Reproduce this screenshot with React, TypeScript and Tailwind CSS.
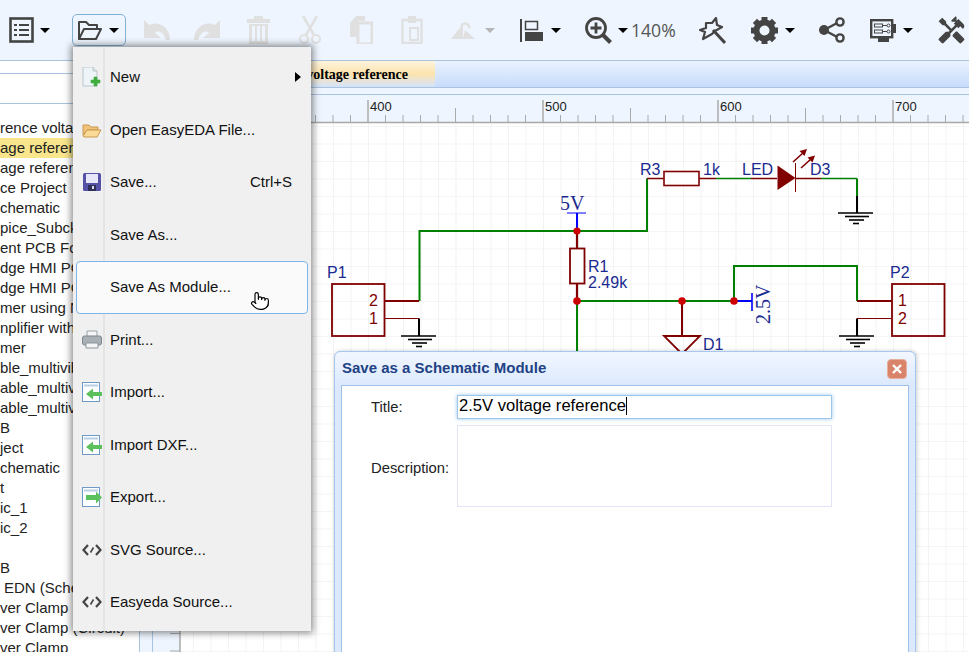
import { Pointer } from "lucide-react";
import { MdHandyman } from "react-icons/md";

const treeRows = [
  { text: "rence voltage reference", cls: "" },
  { text: "age reference", cls: "bg-[#f8e58c]" },
  { text: "age reference", cls: "" },
  { text: "ce Project", cls: "" },
  { text: "chematic", cls: "" },
  { text: "pice_Subckt", cls: "" },
  { text: "ent PCB Footprint", cls: "" },
  { text: "dge HMI PCB", cls: "" },
  { text: "dge HMI PCB", cls: "" },
  { text: "mer using NE555", cls: "" },
  { text: "nplifier with LM386", cls: "" },
  { text: "mer", cls: "" },
  { text: "ble_multivibrator", cls: "" },
  { text: "able_multivibrator", cls: "" },
  { text: "able_multivibrator", cls: "" },
  { text: "B", cls: "" },
  { text: "ject", cls: "" },
  { text: "chematic", cls: "" },
  { text: "t", cls: "" },
  { text: "ic_1", cls: "" },
  { text: "ic_2", cls: "" },
  { text: "", cls: "" },
  { text: "B", cls: "" },
  { text: "EDN (Schematic)", cls: "pl-[4px]" },
  { text: "ver Clamp (Schematic)", cls: "" },
  { text: "ver Clamp (Circuit)", cls: "" },
  { text: "ver Clamp", cls: "" },
];

function Caret({ className = "", grey = false }: { className?: string; grey?: boolean }) {
  return (
    <span
      className={`shrink-0 w-[10px] h-0 border-x-[5px] border-t-[5px] border-x-transparent ${
        grey ? "border-t-[#b5b5b5]" : "border-t-black"
      } ${className}`}
    />
  );
}

function Toolbar() {
  const dark = "#444444";
  const off = "#e0e0e0";
  return (
    <div className="flex items-center h-[60px] shrink-0 bg-[#eef5fe]">
      {/* list */}
      <svg width="25" height="26" viewBox="0 0 25 26" className="ml-[9px] shrink-0">
        <rect x="1.5" y="1.5" width="22" height="23" fill="none" stroke={dark} strokeWidth="2.6" />
        <path d="M5 8h3M10 8h10M5 13h3M10 13h10M5 18h3M10 18h10" stroke={dark} strokeWidth="2.2" />
      </svg>
      <Caret className="ml-[6px]" />
      {/* open, pressed */}
      <div className="ml-[22px] w-[54px] h-[32px] shrink-0 flex items-center pl-[4px] border border-[#7fb0d6] rounded-[5px]">
        <svg width="25" height="21" viewBox="0 0 25 21" className="shrink-0">
          <path d="M2 19V2h7l3 3h8v4M2 19h17l5-10H7z" fill="none" stroke={dark} strokeWidth="2" strokeLinejoin="round" />
        </svg>
        <Caret className="ml-[7px]" />
      </div>
      {/* undo, redo */}
      <svg width="27" height="22" viewBox="0 0 27 22" className="ml-[17px] shrink-0">
        <path d="M1 1v18h17l-6-5c3-3 8-2 11 7h4C27 8 15 1 6 6z" fill={off} />
      </svg>
      <svg width="27" height="22" viewBox="0 0 27 22" className="ml-[24px] shrink-0 -scale-x-100">
        <path d="M1 1v18h17l-6-5c3-3 8-2 11 7h4C27 8 15 1 6 6z" fill={off} />
      </svg>
      {/* trash */}
      <svg width="23" height="28" viewBox="0 0 23 28" className="ml-[26px] shrink-0">
        <path d="M7 0h9v3h7v4H0V3h7z" fill={off} />
        <path d="M2 8h19v20H2zM5 10v15h3V10zM10 10v15h3V10zM15 10v15h3V10z" fill={off} fillRule="evenodd" />
      </svg>
      {/* scissors */}
      <svg width="22" height="28" viewBox="0 0 22 28" className="ml-[29px] shrink-0">
        <path d="M4 0l11 19M18 0L7 19" stroke={off} strokeWidth="2.6" fill="none" />
        <circle cx="5" cy="23" r="4" fill="none" stroke={off} strokeWidth="2" />
        <circle cx="17" cy="23" r="4" fill="none" stroke={off} strokeWidth="2" />
      </svg>
      {/* copy */}
      <svg width="24" height="28" viewBox="0 0 24 28" className="ml-[28px] shrink-0">
        <path d="M7 0h9v5H9v16H1V7z" fill={off} />
        <path d="M11 7h8l4 0v21H9V7z" fill="none" stroke={off} strokeWidth="3" />
      </svg>
      {/* paste */}
      <svg width="23" height="28" viewBox="0 0 23 28" className="ml-[28px] shrink-0">
        <path d="M1.5 4h19v23h-19z" fill="none" stroke={off} strokeWidth="2.4" />
        <path d="M7 0h8v7H7z" fill={off} />
        <path d="M9 12h8v12H9z" fill="none" stroke={off} strokeWidth="2" />
      </svg>
      {/* rotate / flip */}
      <svg width="25" height="19" viewBox="0 0 25 19" className="ml-[26px] shrink-0">
        <path d="M1 18L13 3v15zM13 18h12L15 9z" fill={off} />
        <path d="M11 5c3-4 7-3 9 2" fill="none" stroke={off} strokeWidth="2.4" />
      </svg>
      <Caret grey className="ml-[10px]" />
      {/* align */}
      <svg width="23" height="23" viewBox="0 0 23 23" className="ml-[25px] shrink-0">
        <path d="M1 0v23" stroke={dark} strokeWidth="2" />
        <rect x="5.5" y="2.5" width="12" height="8" fill="none" stroke={dark} strokeWidth="1.5" />
        <rect x="5" y="13" width="18" height="9" fill={dark} />
      </svg>
      <Caret className="ml-[8px]" />
      {/* zoom */}
      <svg width="27" height="27" viewBox="0 0 27 27" className="ml-[24px] shrink-0">
        <circle cx="11" cy="11" r="9.5" fill="none" stroke={dark} strokeWidth="2.8" />
        <path d="M11 5.5v11M5.5 11h11" stroke={dark} strokeWidth="2.8" />
        <path d="M18 18l7.5 7.5" stroke={dark} strokeWidth="4" />
      </svg>
      <Caret className="ml-[6px]" />
      <span className="ml-[3px] w-[44px] shrink-0 text-[17.6px] text-[#555] font-['Open_Sans',sans-serif]">140%</span>
      {/* wand */}
      <svg width="27" height="27" viewBox="0 0 27 27" className="ml-[24px] shrink-0">
        <path d="M7 6h6l4-5 1 7 5 2-7 4-3 3-9 5 2-7-5-2 6-2z" fill="none" stroke={dark} strokeWidth="2.2" strokeLinejoin="round" />
        <path d="M14 13l12 13" stroke={dark} strokeWidth="3" />
      </svg>
      {/* gear */}
      <svg width="27" height="27" viewBox="0 0 27 27" className="ml-[25px] shrink-0">
        <g fill={dark}>
          <rect x="10.5" y="0" width="6" height="27" />
          <rect x="10.5" y="0" width="6" height="27" transform="rotate(45 13.5 13.5)" />
          <rect x="10.5" y="0" width="6" height="27" transform="rotate(90 13.5 13.5)" />
          <rect x="10.5" y="0" width="6" height="27" transform="rotate(135 13.5 13.5)" />
          <circle cx="13.5" cy="13.5" r="11" />
        </g>
        <circle cx="13.5" cy="13.5" r="5" fill="#eef5fe" />
      </svg>
      <Caret className="ml-[7px]" />
      {/* share */}
      <svg width="26" height="26" viewBox="0 0 26 26" className="ml-[24px] shrink-0">
        <path d="M5 13L21 4.5M5 13l16 8.5" stroke={dark} strokeWidth="2.4" />
        <circle cx="5" cy="13" r="5" fill={dark} />
        <circle cx="21" cy="5" r="3.6" fill="#eef5fe" stroke={dark} strokeWidth="2.4" />
        <circle cx="21" cy="21" r="3.6" fill="#eef5fe" stroke={dark} strokeWidth="2.4" />
      </svg>
      {/* panel */}
      <svg width="26" height="23" viewBox="0 0 26 23" className="ml-[25px] shrink-0">
        <rect x="1.2" y="1.2" width="21" height="17" fill="none" stroke={dark} strokeWidth="2.4" />
        <path d="M23 5h3v9h-3zM8 19h11v4H8z" fill={dark} />
        <rect x="4.5" y="5" width="8" height="3" fill="none" stroke={dark} strokeWidth="1" />
        <rect x="4.5" y="11" width="8" height="3" fill="none" stroke={dark} strokeWidth="1" />
        <path d="M12.5 6.5H17M12.5 12.5H17" stroke={dark} strokeWidth="1" />
        <circle cx="18.5" cy="6.5" r="1.5" fill="none" stroke={dark} />
        <circle cx="18.5" cy="12.5" r="1.5" fill="none" stroke={dark} />
      </svg>
      <Caret className="ml-[7px]" />
      <MdHandyman className="ml-[23px] shrink-0 w-[31px] h-[31px] text-[#444]" />
    </div>
  );
}

function LeftTree() {
  return (
    <div className="w-[139px] shrink-0 bg-white flex flex-col overflow-hidden border-t border-[#a9c4e0]">
      <div className="h-[13px] shrink-0 border-b border-[#a9c4e0]" />
      <div className="h-[30px] shrink-0 border-b border-[#a9c4e0]" />
      <div className="pt-[14px] flex flex-col text-[15px] text-[#222] font-['Liberation_Sans',sans-serif]">
        {treeRows.map((row, i) => (
          <div key={i} className={`h-[20px] leading-[20px] whitespace-pre ${row.cls}`}>
            {row.text}
          </div>
        ))}
      </div>
    </div>
  );
}

const blue = "#1a2a90";
const red = "#800000";
const green = "#008000";

function Ground({ x, y }: { x: number; y: number }) {
  return (
    <g stroke="#000" strokeWidth="1.6">
      <path d={`M${x - 18} ${y}H${x + 17}`} />
      <path d={`M${x - 11} ${y + 3.5}H${x + 13}`} />
      <path d={`M${x - 7} ${y + 7}H${x + 8}`} />
      <path d={`M${x - 3} ${y + 10.5}H${x + 3}`} />
    </g>
  );
}

function Canvas() {
  const ticks = [];
  for (let x = 193; x < 969; x += 17.5) {
    const n = Math.round((x - 368) / 17.5);
    const len = n % 10 === 0 ? 22 : n % 5 === 0 ? 14 : 7;
    ticks.push(<path key={x} d={`M${x} 122V${122 - len}`} stroke="#aaa" strokeWidth={n % 10 === 0 ? 1.5 : 1} />);
  }
  return (
    <svg viewBox="153 95 816 557" className="block w-[816px] h-[557px] font-['Liberation_Sans',sans-serif]">
      <defs>
        <pattern id="grid" x="368" y="126" width="17.5" height="17.5" patternUnits="userSpaceOnUse">
          <path d="M17.5 0H0V17.5" fill="none" stroke="#ececec" strokeWidth="1.2" />
        </pattern>
      </defs>
      <rect x="180" y="122" width="789" height="530" fill="#fff" />
      <rect x="180" y="122" width="789" height="530" fill="url(#grid)" />
      {/* rulers */}
      <rect x="153" y="95" width="816" height="27" fill="#eef5fe" />
      <rect x="153" y="122" width="27" height="530" fill="#eef5fe" />
      {ticks}
      <path d="M153 122.5H969" stroke="#a8a8a8" strokeWidth="1.5" />
      <path d="M180 122V652" stroke="#a8a8a8" strokeWidth="1.5" />
      <path d="M170 633.5h10M170 651h10" stroke="#aaa" />
      <g fontSize="13" fill="#222">
        <text x="370" y="111">400</text>
        <text x="545" y="111">500</text>
        <text x="720" y="111">600</text>
        <text x="895" y="111">700</text>
      </g>

      {/* wires */}
      <g fill="none" stroke={green} strokeWidth="2">
        <path d="M419.5 301V231H647V178.5" />
        <path d="M577 301V352" />
        <path d="M577 301H734" />
        <path d="M734 301V266H857V301" />
        <path d="M857 178.5V196" />
      </g>
      <path d="M716 178.5H751M821 178.5H857" stroke={green} strokeWidth="1.4" />

      {/* P1 */}
      <rect x="332" y="284" width="52.5" height="52" fill="none" stroke={red} strokeWidth="1.8" />
      <path d="M385 301h34" stroke={red} strokeWidth="2.2" />
      <path d="M385 318.5h34" stroke={red} strokeWidth="1.2" />
      <path d="M419 318.5V336" stroke="#000" strokeWidth="2" />
      <Ground x={419} y={336} />

      {/* P2 */}
      <rect x="892" y="284" width="52.5" height="52" fill="none" stroke={red} strokeWidth="1.8" />
      <path d="M857 301h35" stroke={red} strokeWidth="2.2" />
      <path d="M857 318.5h35" stroke={red} strokeWidth="1.2" />
      <path d="M857 318.5V336" stroke="#000" strokeWidth="2" />
      <Ground x={857} y={336} />

      {/* LED branch */}
      <path d="M647 178.5h17M699 178.5h17M751 178.5h26M796 178.5h25" stroke={red} strokeWidth="1.4" />
      <rect x="664" y="171.5" width="35" height="14" fill="#fff" stroke={red} strokeWidth="1.6" />
      <path d="M777.5 165.5V190L795.5 178z" fill={red} />
      <path d="M795.5 163V192" stroke={red} strokeWidth="1" />
      <path d="M793 162l10-9M801 168l10-9" stroke={red} strokeWidth="1.6" />
      <path d="M807 149l-7.5 2 5 5zM815 155.5l-7.5 2 5 5z" fill={red} />
      <path d="M857 196V213" stroke="#000" strokeWidth="2" />
      <Ground x={856} y={213} />

      {/* R1 */}
      <path d="M577 231V248M577 284V301" stroke={red} strokeWidth="2.2" />
      <rect x="570" y="248.5" width="14.5" height="35" fill="#fff" stroke={red} strokeWidth="1.8" />

      {/* D1 */}
      <path d="M682 301V336" stroke={red} strokeWidth="2" />
      <path d="M664 336H700L682 354z" fill="none" stroke={red} strokeWidth="1.8" />

      {/* power flags */}
      <path d="M577 213V231" stroke="#0000ff" strokeWidth="2" />
      <path d="M567 213H586" stroke="#0000ff" strokeWidth="1" />
      <path d="M734 301H752" stroke="#0000ff" strokeWidth="2" />
      <path d="M752 293V311" stroke="#0000ff" strokeWidth="1.6" />

      <g fill="#cc0000">
        <circle cx="577" cy="231" r="3.6" />
        <circle cx="577" cy="301" r="3.8" />
        <circle cx="682" cy="301" r="3.8" />
        <circle cx="734" cy="301" r="3.8" />
      </g>

      <g fontSize="16" fill={blue}>
        <text x="327" y="278">P1</text>
        <text x="588" y="272">R1</text>
        <text x="588" y="288">2.49k</text>
        <text x="640" y="175">R3</text>
        <text x="703" y="175">1k</text>
        <text x="742" y="175">LED</text>
        <text x="810" y="175">D3</text>
        <text x="890" y="278">P2</text>
        <text x="703" y="350">D1</text>
      </g>
      <g fontSize="16" fill={red}>
        <text x="369" y="306">2</text>
        <text x="369" y="324">1</text>
        <text x="898" y="306">1</text>
        <text x="898" y="324">2</text>
      </g>
      <g fontSize="20" fill={blue} className="font-['Liberation_Serif',serif]">
        <text x="560" y="210">5V</text>
        <text transform="translate(770 324) rotate(-90)">2.5V</text>
      </g>
    </svg>
  );
}

function CodeIcon() {
  return (
    <svg width="20" height="14" viewBox="0 0 20 14">
      <path d="M6 2L1.5 7 6 12M14 2l4.5 5L14 12" fill="none" stroke="#444" strokeWidth="2.2" />
      <path d="M11.5 4.5l-3 5" stroke="#444" strokeWidth="1.6" />
    </svg>
  );
}

function PageArrow({ dir }: { dir: "in" | "out" }) {
  return (
    <svg width="20" height="20" viewBox="0 0 20 20">
      <rect x="0.5" y="0.5" width="17" height="19" fill="#fdfeff" stroke="#6f9ac6" />
      <path d="M2 3.5h14" stroke="#b9cfe6" strokeWidth="2" />
      {dir === "in" ? (
        <path d="M20 10h-9V6.5L4 12l7 5.5V14h9z" fill="#5cc05c" />
      ) : (
        <path d="M4 8h10V4.5l6 6-6 6V13H4z" fill="#5cc05c" />
      )}
    </svg>
  );
}

const menuItems = [
  {
    label: "New",
    icon: (
      <svg width="20" height="20" viewBox="0 0 20 20">
        <path d="M1 0h10l4 4v15H1z" fill="#eef4f8" stroke="#b9c6cc" />
        <path d="M11 0v4h4" fill="#dde6ea" stroke="#b9c6cc" />
        <path d="M12 10h3v3h3v3h-3v3h-3v-3H9v-3h3z" fill="#3fae3f" stroke="#3fae3f" strokeWidth="0.6" />
      </svg>
    ),
  },
  {
    label: "Open EasyEDA File...",
    icon: (
      <svg width="20" height="16" viewBox="0 0 20 16">
        <path d="M1 13V3h6l2 2h7v3H5z" fill="#f0c27a" stroke="#c89a50" />
        <path d="M1 14l4-6h14l-4 7H2z" fill="#fbd997" stroke="#c89a50" />
      </svg>
    ),
  },
  {
    label: "Save...",
    shortcut: "Ctrl+S",
    icon: (
      <svg width="18" height="18" viewBox="0 0 18 18">
        <rect width="18" height="18" rx="1.5" fill="#5552a8" />
        <rect x="3" y="1" width="12" height="9" fill="#e6e8fa" />
        <rect x="5" y="12" width="8" height="6" fill="#2f2f58" />
        <rect x="9" y="13" width="2" height="3" fill="#dcdcf0" />
      </svg>
    ),
  },
  { label: "Save As...", icon: null },
  { label: "Save As Module...", icon: null, hover: true },
  {
    label: "Print...",
    icon: (
      <svg width="20" height="19" viewBox="0 0 20 19">
        <path d="M5 1h10v6H5z" fill="#f4f6f8" stroke="#9aa2a8" />
        <rect x="0.5" y="6" width="19" height="9" rx="2" fill="#a9b0b5" stroke="#80878c" />
        <path d="M4 13h12v5H4z" fill="#f4f6f8" stroke="#8c9398" />
      </svg>
    ),
  },
  { label: "Import...", icon: <PageArrow dir="in" /> },
  { label: "Import DXF...", icon: <PageArrow dir="in" /> },
  { label: "Export...", icon: <PageArrow dir="out" /> },
  { label: "SVG Source...", icon: <CodeIcon /> },
  { label: "Easyeda Source...", icon: <CodeIcon /> },
];

function FileMenu() {
  return (
    <div className="absolute left-[73px] top-[47px] w-[238px] pt-[4px] pb-[2px] bg-[#f0f0f0] shadow-[0_0_7px_2px_rgba(0,0,0,0.45)] font-['Liberation_Sans',sans-serif] text-[15px] text-[#111]">
      <div className="absolute left-[30px] top-0 bottom-0 w-[2px] bg-[#e4e4e4]" />
      {menuItems.map((item) => (
        <div
          key={item.label}
          className={`relative h-[52.5px] flex items-center mx-[3px] rounded-[4px] border ${
            item.hover ? "border-[#7eb4ea] bg-[#fafafa]" : "border-transparent"
          }`}
        >
          <div className="w-[30px] shrink-0 flex justify-center">{item.icon}</div>
          <span className="grow pl-[3px]">{item.label}</span>
          {item.shortcut && <span className="mr-[15px]">{item.shortcut}</span>}
          {item.label === "New" && (
            <span className="mr-[6px] w-0 h-0 border-y-[5px] border-l-[6px] border-y-transparent border-l-black" />
          )}
        </div>
      ))}
    </div>
  );
}

function SaveDialog() {
  return (
    <div className="absolute left-[334px] top-[351px] w-[582px] h-[320px] rounded-t-[6px] border border-[#a5c7f0] bg-[#dce9fd] shadow-[1px_0_4px_rgba(0,0,0,0.2)] flex flex-col px-[6px] font-['Liberation_Sans',sans-serif]">
      <div className="h-[33px] shrink-0 -mx-[6px] px-[7px] rounded-t-[6px] flex items-center justify-between bg-gradient-to-b from-[#f2f7ff] to-[#dce9fd]">
        <span className="font-bold text-[15px] text-[#1e4284]">Save as a Schematic Module</span>
        <span className="mr-[1px] w-[20px] h-[20px] rounded-[4px] bg-[#d9846a] border border-[#e6b09c] flex items-center justify-center">
          <svg width="10" height="10" viewBox="0 0 10 10">
            <path d="M1 1l8 8M9 1l-8 8" stroke="#fff" strokeWidth="2.4" />
          </svg>
        </span>
      </div>
      <div className="grow bg-white border border-[#9dc0ea] pt-[9px] text-[14.8px] text-[#222]">
        <div className="flex items-center h-[24px]">
          <span className="ml-[29px] w-[86px] shrink-0">Title:</span>
          <div className="w-[375px] h-[24px] pb-[2px] border border-[#9cc7ec] shadow-[0_0_4px_#9cc7ec] flex items-center pl-[1px] text-[16.6px] text-black">
            2.5V voltage reference
            <span className="w-px h-[18px] bg-black" />
          </div>
        </div>
        <div className="flex items-center mt-[6px]">
          <span className="ml-[29px] w-[86px] shrink-0 pt-[4px]">Description:</span>
          <div className="w-[375px] h-[82px] border border-[#e0e4f6]" />
        </div>
      </div>
    </div>
  );
}

export default function App() {
  return (
    <div className="relative w-[969px] h-[652px] overflow-hidden bg-[#eef5fe] flex flex-col">
      <Toolbar />
      <div className="flex grow min-h-0">
        <LeftTree />
        <div className="w-[14px] shrink-0 border-x border-[#a9c4e0] bg-[#eef5fe]" />
        <div className="grow min-w-0 flex flex-col">
          <div className="h-[35px] shrink-0 border-t border-b border-[#a9c4e0] bg-[#eef5fe]">
            <div className="h-[27px] bg-gradient-to-b from-[#eaf2fe] to-[#c7dcfb] flex border-b border-[#a9c4e0]">
              <div className="w-[282px] h-full flex items-center justify-end pr-[27px] bg-gradient-to-b from-[#fdf3dc] via-[#fde3ad] to-[#d3e3fb] font-bold text-[14px] text-black font-['Liberation_Serif',serif] whitespace-nowrap">
                2.5V voltage reference
              </div>
            </div>
          </div>
          <Canvas />
        </div>
      </div>
      <FileMenu />
      <SaveDialog />
      <Pointer className="absolute left-[250px] top-[289px] w-[20px] h-[24px] text-black fill-white" strokeWidth={1.4} />
    </div>
  );
}
